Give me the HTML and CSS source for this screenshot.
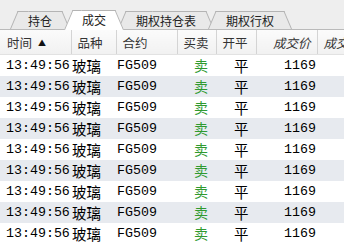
FILE: index.html
```html
<!DOCTYPE html>
<html lang="zh-CN">
<head>
    <meta charset="UTF-8">
    <title>成交</title>
    <link rel="stylesheet" href="styles.css">
</head>
<body>
    <div class="tabs">
        <div class="tab">持仓</div>
        <div class="tab active">成交</div>
        <div class="tab">期权持仓表</div>
        <div class="tab">期权行权</div>
    </div>

    <table class="trades">
        <colgroup>
            <col class="c-time">
            <col class="c-kind">
            <col class="c-code">
            <col class="c-side">
            <col class="c-open">
            <col class="c-price">
            <col class="c-qty">
        </colgroup>
        <thead>
            <tr>
                <th>时间<span class="sort">&#9650;</span></th>
                <th>品种</th>
                <th>合约</th>
                <th>买卖</th>
                <th>开平</th>
                <th class="num">成交价</th>
                <th class="num-l">成交量</th>
            </tr>
        </thead>
        <tbody>
            <tr><td class="time">13:49:56</td><td class="cn">玻璃</td><td class="code">FG509</td><td class="sell">卖</td><td class="cn open">平</td><td class="price">1169</td><td></td></tr>
            <tr><td class="time">13:49:56</td><td class="cn">玻璃</td><td class="code">FG509</td><td class="sell">卖</td><td class="cn open">平</td><td class="price">1169</td><td></td></tr>
            <tr><td class="time">13:49:56</td><td class="cn">玻璃</td><td class="code">FG509</td><td class="sell">卖</td><td class="cn open">平</td><td class="price">1169</td><td></td></tr>
            <tr><td class="time">13:49:56</td><td class="cn">玻璃</td><td class="code">FG509</td><td class="sell">卖</td><td class="cn open">平</td><td class="price">1169</td><td></td></tr>
            <tr><td class="time">13:49:56</td><td class="cn">玻璃</td><td class="code">FG509</td><td class="sell">卖</td><td class="cn open">平</td><td class="price">1169</td><td></td></tr>
            <tr><td class="time">13:49:56</td><td class="cn">玻璃</td><td class="code">FG509</td><td class="sell">卖</td><td class="cn open">平</td><td class="price">1169</td><td></td></tr>
            <tr><td class="time">13:49:56</td><td class="cn">玻璃</td><td class="code">FG509</td><td class="sell">卖</td><td class="cn open">平</td><td class="price">1169</td><td></td></tr>
            <tr><td class="time">13:49:56</td><td class="cn">玻璃</td><td class="code">FG509</td><td class="sell">卖</td><td class="cn open">平</td><td class="price">1169</td><td></td></tr>
            <tr><td class="time">13:49:56</td><td class="cn">玻璃</td><td class="code">FG509</td><td class="sell">卖</td><td class="cn open">平</td><td class="price">1169</td><td></td></tr>
        </tbody>
    </table>
</body>
</html>
```

FILE: styles.css
```css
body {
    margin: 0;
    background-color: #fff;
    font-family: "Noto Sans CJK SC", sans-serif;
    color: #000;
    overflow: hidden;
}
.tabs {
    display: flex;
    align-items: flex-end;
    height: 29px;
    padding-left: 10px;
    background-color: #eeeeee;
    border-bottom: 1px solid #bababa;
}
.tab {
    position: relative;
    z-index: 1;
    height: 19px;
    margin-bottom: -1px;
    padding: 0 18px;
    font-size: 12px;
    line-height: 20px;
    color: #222;
}
.tab + .tab {
    margin-left: -6px;
}
.tab::before,
.tab::after {
    content: '';
    position: absolute;
    top: 0;
    bottom: 1px;
    width: 55%;
    z-index: -1;
    background-color: #e9e9e9;
    border-top: 1px solid #b4b4b4;
}
.tab::before {
    left: 0;
    border-left: 1px solid #b4b4b4;
    transform: skewX(-23deg);
    transform-origin: bottom left;
}
.tab::after {
    right: 0;
    border-right: 1px solid #b4b4b4;
    transform: skewX(23deg);
    transform-origin: bottom right;
}
.tab.active {
    z-index: 2;
    height: 20px;
}
.tab.active::before,
.tab.active::after {
    bottom: 0;
    background-color: #fff;
}
.trades {
    width: 344px;
    table-layout: fixed;
    border-collapse: collapse;
}
.c-time { width: 71px; }
.c-kind { width: 45px; }
.c-code { width: 61px; }
.c-side { width: 39px; }
.c-open { width: 40px; }
.c-price { width: 61px; }
.trades th {
    height: 24px;
    padding: 0 0 0 6px;
    font-size: 12.5px;
    font-weight: normal;
    color: #333;
    text-align: left;
    white-space: nowrap;
    overflow: hidden;
    background: linear-gradient(#fbfbfb, #f1f1f1);
    border-right: 1px solid #d4d4d4;
    border-bottom: 1px solid #e2e2e2;
}
.trades th:first-child {
    padding-left: 7px;
}
.trades th.num {
    text-align: right;
    padding: 0 6px 0 0;
    font-style: italic;
}
.trades th.num-l {
    font-style: italic;
    border-right: none;
}
.sort {
    font-size: 8px;
    vertical-align: 2px;
    margin-left: 6px;
    color: #111;
}
.trades td {
    height: 21px;
    padding: 0;
    line-height: 21px;
    white-space: nowrap;
    overflow: hidden;
    font-family: "Liberation Mono", monospace;
    font-size: 13.3px;
}
.trades tbody tr:nth-child(even) td {
    background-color: #e7eaef;
}
.trades td.time {
    padding-left: 6px;
    overflow: visible;
}
.trades td.cn {
    font-family: "Noto Sans CJK SC", sans-serif;
    font-size: 14.5px;
    padding-left: 1px;
}
.trades td.code {
    padding-left: 1px;
}
.trades td.sell {
    font-family: "Noto Sans CJK SC", sans-serif;
    font-size: 14px;
    color: #2f9a2f;
    padding-left: 17px;
}
.trades td.open {
    padding-left: 18px;
}
.trades td.price {
    text-align: right;
    padding-right: 1px;
}
```
